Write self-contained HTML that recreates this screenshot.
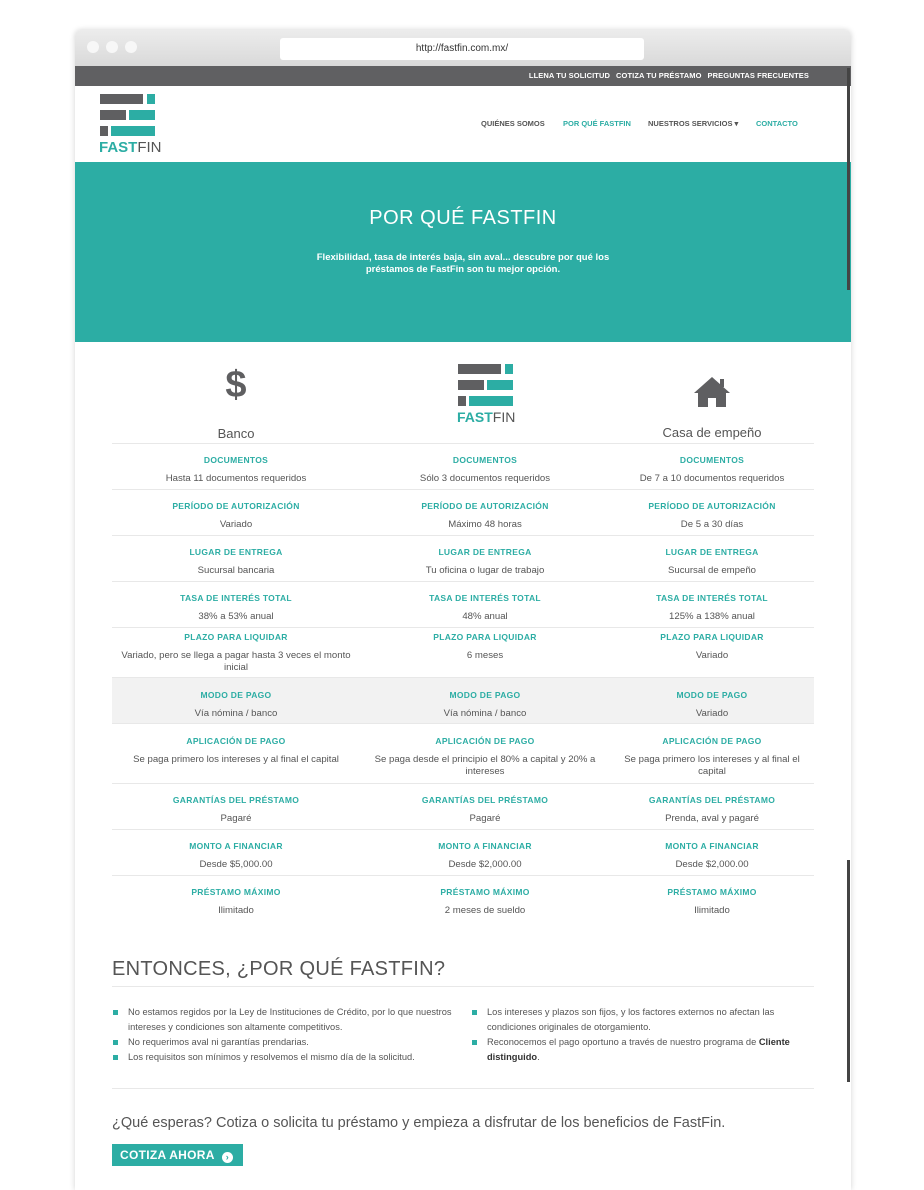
<!DOCTYPE html>
<html><head><meta charset="utf-8"><style>
*{margin:0;padding:0;box-sizing:border-box}
body{width:924px;height:1180px;background:#fff;position:relative;overflow:hidden;font-family:"Liberation Sans",sans-serif;color:#555}
.win{position:absolute;left:75px;top:30px;width:776px;height:1160px;background:#fff;box-shadow:0 0 6px rgba(0,0,0,.18);border-radius:6px 6px 0 0;overflow:hidden}
.tb{position:absolute;left:0;top:0;width:776px;height:36px;background:linear-gradient(#ececec,#d9d9d9)}
.dot{position:absolute;top:11px;width:12px;height:12px;border-radius:50%;background:#f7f7f7}
.url{position:absolute;left:205px;top:8px;width:364px;height:22px;background:#fff;border-radius:3px;font-size:10px;color:#333;text-align:center;line-height:22px}
.top{position:absolute;left:0;top:36px;width:776px;height:20px;background:#606062;color:#fff;font-size:7.5px;font-weight:bold;text-align:right;padding-right:42px;line-height:20px;letter-spacing:.1px}
.top span{margin-left:6px}
.nav{position:absolute;top:89px;font-size:7.5px;font-weight:bold;color:#555}
.hero{position:absolute;left:0;top:132px;width:776px;height:180px;background:#2cada4;color:#fff;text-align:center}
.a{position:absolute;text-align:center;width:240px;margin-left:-120px}
.l{font-size:8.5px;font-weight:bold;color:#2cada4;letter-spacing:.3px}
.v{font-size:9.6px;color:#555}
.hr{position:absolute;left:37px;width:702px;height:1px;background:#e8e8e8}
.li{position:absolute;font-size:9.3px;line-height:15px;color:#555;padding-left:15px}
.li:before{content:"";position:absolute;left:0;top:5px;width:5px;height:5px;background:#2cada4}
.sb{position:absolute;left:772px;width:3px;background:#444;z-index:5}
</style></head><body>
<div class="win">
<div class="tb"><div class="dot" style="left:12px"></div><div class="dot" style="left:31px"></div><div class="dot" style="left:50px"></div><div class="url">http://fastfin.com.mx/</div></div>
<div class="top"><span>LLENA TU SOLICITUD</span><span>COTIZA TU PRÉSTAMO</span><span>PREGUNTAS FRECUENTES</span></div>
<div class="sb" style="top:38px;height:222px"></div>
<div class="sb" style="top:830px;height:222px"></div>
<div style="position:absolute;left:25px;top:64px">
<div style="position:absolute;left:0;top:0;width:43px;height:10px;background:#5f5f61"></div>
<div style="position:absolute;left:47px;top:0;width:8px;height:10px;background:#2cada4"></div>
<div style="position:absolute;left:0;top:16px;width:26px;height:10px;background:#5f5f61"></div>
<div style="position:absolute;left:29px;top:16px;width:26px;height:10px;background:#2cada4"></div>
<div style="position:absolute;left:0;top:32px;width:8px;height:10px;background:#5f5f61"></div>
<div style="position:absolute;left:11px;top:32px;width:44px;height:10px;background:#2cada4"></div>
<div style="position:absolute;left:-1px;top:45px;font-size:15px;font-weight:bold;color:#2cada4;white-space:nowrap">FAST<span style="color:#555;font-weight:normal">FIN</span></div>
</div>
<div class="nav" style="left:406px">QUIÉNES SOMOS</div>
<div class="nav" style="left:488px;color:#2cada4">POR QUÉ FASTFIN</div>
<div class="nav" style="left:573px">NUESTROS SERVICIOS ▾</div>
<div class="nav" style="left:681px;color:#2cada4">CONTACTO</div>
<div class="hero">
<div style="position:absolute;top:45px;width:776px;font-size:20px;letter-spacing:.5px">POR QUÉ FASTFIN</div>
<div style="position:absolute;top:90px;width:776px;font-size:9.5px;font-weight:bold;line-height:12px">Flexibilidad, tasa de interés baja, sin aval... descubre por qué los<br>préstamos de FastFin son tu mejor opción.</div>
</div>
<div style="position:absolute;left:146px;top:334px;font-size:38px;font-weight:bold;color:#5f5f61;width:30px;text-align:center">$</div>
<div class="a" style="left:161px;top:396px;font-size:13px;color:#555">Banco</div>
<svg style="position:absolute;left:618px;top:346px" width="38" height="32" viewBox="0 0 38 32"><path d="M19 1 L37 17 L33 17 L33 31 L23 31 L23 22 L15 22 L15 31 L5 31 L5 17 L1 17 Z" fill="#5f5f61"/><rect x="27" y="3" width="4" height="8" fill="#5f5f61"/></svg>
<div class="a" style="left:637px;top:395px;font-size:13px;color:#555">Casa de empeño</div>
<div style="position:absolute;left:383px;top:334px">
<div style="position:absolute;left:0;top:0;width:43px;height:10px;background:#5f5f61"></div>
<div style="position:absolute;left:47px;top:0;width:8px;height:10px;background:#2cada4"></div>
<div style="position:absolute;left:0;top:16px;width:26px;height:10px;background:#5f5f61"></div>
<div style="position:absolute;left:29px;top:16px;width:26px;height:10px;background:#2cada4"></div>
<div style="position:absolute;left:0;top:32px;width:8px;height:10px;background:#5f5f61"></div>
<div style="position:absolute;left:11px;top:32px;width:44px;height:10px;background:#2cada4"></div>
<div style="position:absolute;left:-1px;top:45px;font-size:14px;font-weight:bold;color:#2cada4;white-space:nowrap">FAST<span style="color:#555;font-weight:normal">FIN</span></div>
</div>
<div style="position:absolute;left:37px;top:647px;width:702px;height:46px;background:#f2f2f2"></div>
<div class="hr" style="top:413px"></div><div class="hr" style="top:459px"></div><div class="hr" style="top:505px"></div><div class="hr" style="top:551px"></div><div class="hr" style="top:597px"></div><div class="hr" style="top:647px"></div><div class="hr" style="top:693px"></div><div class="hr" style="top:753px"></div><div class="hr" style="top:799px"></div><div class="hr" style="top:845px"></div>
<div id="t"></div>
<div style="position:absolute;left:37px;top:928px;font-size:20px;color:#555;letter-spacing:.3px">ENTONCES, ¿POR QUÉ FASTFIN?</div>
<div class="hr" style="top:956px"></div>
<div class="li" style="left:38px;top:975px;width:340px">No estamos regidos por la Ley de Instituciones de Crédito, por lo que nuestros intereses y condiciones son altamente competitivos.</div>
<div class="li" style="left:38px;top:1005px">No requerimos aval ni garantías prendarias.</div>
<div class="li" style="left:38px;top:1020px">Los requisitos son mínimos y resolvemos el mismo día de la solicitud.</div>
<div class="li" style="left:397px;top:975px;width:330px">Los intereses y plazos son fijos, y los factores externos no afectan las condiciones originales de otorgamiento.</div>
<div class="li" style="left:397px;top:1005px;width:330px">Reconocemos el pago oportuno a través de nuestro programa de <b style="color:#333">Cliente distinguido</b>.</div>
<div class="hr" style="top:1058px"></div>
<div style="position:absolute;left:37px;top:1085px;font-size:14.5px;color:#555">¿Qué esperas? Cotiza o solicita tu préstamo y empieza a disfrutar de los beneficios de FastFin.</div>
<div style="position:absolute;left:37px;top:1114px;width:131px;height:22px;background:#2cada4;color:#fff;font-size:12px;font-weight:bold;line-height:22px;padding-left:8px;letter-spacing:.3px">COTIZA AHORA <span style="display:inline-block;width:11px;height:11px;border-radius:50%;background:#fff;color:#2cada4;font-size:9px;line-height:11px;text-align:center;margin-left:4px;vertical-align:-1px">›</span></div>
</div>
<script>
var rows=[[460,478,"DOCUMENTOS",["Hasta 11 documentos requeridos","Sólo 3 documentos requeridos","De 7 a 10 documentos requeridos"]],
[506,524,"PERÍODO DE AUTORIZACIÓN",["Variado","Máximo 48 horas","De 5 a 30 días"]],
[552,570,"LUGAR DE ENTREGA",["Sucursal bancaria","Tu oficina o lugar de trabajo","Sucursal de empeño"]],
[598,616,"TASA DE INTERÉS TOTAL",["38% a 53% anual","48% anual","125% a 138% anual"]],
[637,655,"PLAZO PARA LIQUIDAR",["Variado, pero se llega a pagar hasta 3 veces el monto inicial","6 meses","Variado"]],
[695,713,"MODO DE PAGO",["Vía nómina / banco","Vía nómina / banco","Variado"]],
[741,759,"APLICACIÓN DE PAGO",["Se paga primero los intereses y al final el capital","Se paga desde el principio el 80% a capital y 20% a intereses","Se paga primero los intereses y al final el capital"]],
[800,818,"GARANTÍAS DEL PRÉSTAMO",["Pagaré","Pagaré","Prenda, aval y pagaré"]],
[846,864,"MONTO A FINANCIAR",["Desde $5,000.00","Desde $2,000.00","Desde $2,000.00"]],
[892,910,"PRÉSTAMO MÁXIMO",["Ilimitado","2 meses de sueldo","Ilimitado"]]];
var cx=[161,410,637],w=[240,230,200],h="";
rows.forEach(function(r){for(var i=0;i<3;i++){h+='<div class="a l" style="left:'+cx[i]+'px;top:'+(r[0]-30-5)+'px">'+r[2]+'</div>';
h+='<div class="a v" style="left:'+cx[i]+'px;width:'+w[i]+'px;margin-left:-'+(w[i]/2)+'px;top:'+(r[1]-30-5)+'px;line-height:12px">'+r[3][i]+'</div>';}});
document.getElementById('t').innerHTML=h;
</script>
</body></html>
